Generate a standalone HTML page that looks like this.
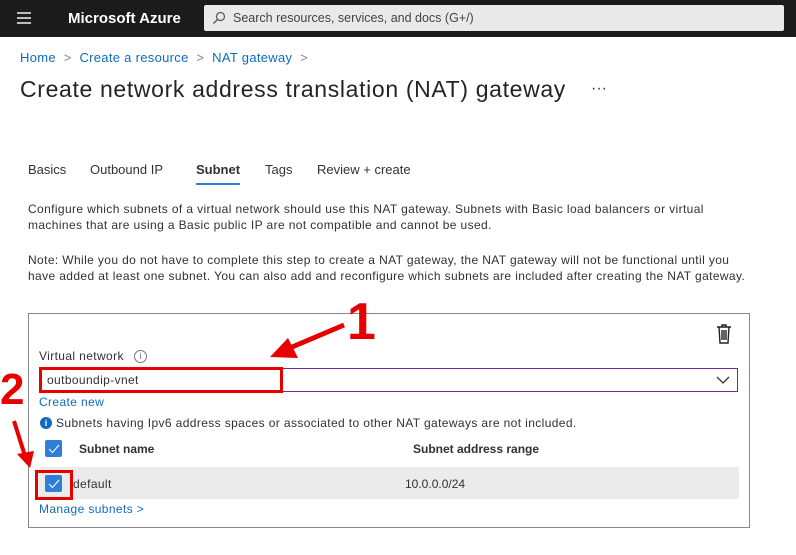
<!DOCTYPE html>
<html><head><style>
*{margin:0;padding:0;box-sizing:border-box}
body{width:796px;height:555px;background:#fff;font-family:"Liberation Sans",sans-serif;color:#323130;position:relative;overflow:hidden}
.a{position:absolute;white-space:nowrap}
.top{left:0;top:0;width:796px;height:37px;background:#1b1b1b}
.lnk{color:#0f6cbd}
.s13{font-size:13px}
.cb{position:absolute;width:17px;height:17px;background:#2f7fd8;border-radius:2px}
.p{letter-spacing:0.38px}
</style></head><body>
<div class="a top"></div>
<div class="a" style="left:17px;top:12px;width:14px;height:2px;background:#bbb;box-shadow:0 5px 0 #bbb,0 10px 0 #bbb"></div>
<div class="a" style="left:68px;top:10px;color:#fff;font-size:15px;font-weight:bold">Microsoft Azure</div>
<div class="a" style="left:204px;top:5px;width:580px;height:26px;background:#e9e9e9;border-radius:2px"></div>
<svg class="a" style="left:212px;top:11px" width="14" height="14"><circle cx="8.5" cy="5.5" r="4" fill="none" stroke="#555" stroke-width="1.2"/><line x1="5.5" y1="8.5" x2="1.5" y2="12.5" stroke="#555" stroke-width="1.3"/></svg>
<div class="a" style="left:233px;top:11px;font-size:12.5px;color:#444">Search resources, services, and docs (G+/)</div>
<div class="a s13" style="left:20px;top:50px;letter-spacing:0.3px"><span class="lnk">Home</span> <span style="color:#888">&nbsp;&gt;&nbsp;</span> <span class="lnk">Create a resource</span> <span style="color:#888">&nbsp;&gt;&nbsp;</span> <span class="lnk">NAT gateway</span> <span style="color:#888">&nbsp;&gt;</span></div>
<div class="a" style="left:20px;top:76px;font-size:23px;color:#252423;letter-spacing:0.65px">Create network address translation (NAT) gateway</div>
<div class="a" style="left:591px;top:80px;font-size:16px">···</div>
<div class="a s13" style="left:28px;top:162px">Basics</div>
<div class="a s13" style="left:90px;top:162px">Outbound IP</div>
<div class="a s13" style="left:196px;top:162px;font-weight:bold">Subnet</div>
<div class="a" style="left:196px;top:183px;width:44px;height:2px;background:#2f7fd8"></div>
<div class="a s13" style="left:265px;top:162px">Tags</div>
<div class="a s13" style="left:317px;top:162px">Review + create</div>
<div class="a p" style="left:28px;top:201px;font-size:12px;line-height:16px">Configure which subnets of a virtual network should use this NAT gateway. Subnets with Basic load balancers or virtual<br>machines that are using a Basic public IP are not compatible and cannot be used.</div>
<div class="a p" style="left:28px;top:252px;font-size:12px;line-height:16px">Note: While you do not have to complete this step to create a NAT gateway, the NAT gateway will not be functional until you<br>have added at least one subnet. You can also add and reconfigure which subnets are included after creating the NAT gateway.</div>
<div class="a" style="left:28px;top:313px;width:722px;height:215px;border:1px solid #8a8886"></div>
<svg class="a" style="left:715px;top:323px" width="18" height="22"><path d="M2 4h14M7 4V2h4v2M4 4l1 16h8l1-16M7 7v10M9 7v10M11 7v10" fill="none" stroke="#222" stroke-width="1.4"/></svg>
<div class="a p" style="left:39px;top:349px;font-size:12px">Virtual network</div>
<div class="a" style="left:134px;top:350px;width:13px;height:13px;border:1px solid #777;border-radius:50%;font-size:9px;text-align:center;line-height:11px;color:#666">i</div>
<div class="a" style="left:39px;top:368px;width:699px;height:24px;border:1px solid #6b2c91"></div>
<svg class="a" style="left:716px;top:376px" width="14" height="9"><path d="M1 1l6 6 6-6" fill="none" stroke="#333" stroke-width="1.3"/></svg>
<div class="a p" style="left:47px;top:373px;font-size:12px">outboundip-vnet</div>
<div class="a" style="left:39px;top:367px;width:244px;height:26px;border:3px solid #e60000"></div>
<div class="a lnk p" style="left:39px;top:395px;font-size:12px">Create new</div>
<div class="a" style="left:40px;top:417px;width:12px;height:12px;background:#0f6cbd;border-radius:50%;color:#fff;font-size:9px;font-weight:bold;text-align:center;line-height:12px">i</div>
<div class="a p" style="left:56px;top:416px;font-size:12px">Subnets having Ipv6 address spaces or associated to other NAT gateways are not included.</div>
<div class="cb" style="left:45px;top:440px"></div>
<svg class="a" style="left:48px;top:444px" width="12" height="10"><path d="M1 5l3.5 3.5L11 1" fill="none" stroke="#fff" stroke-width="1.1"/></svg>
<div class="a" style="left:79px;top:442px;font-size:12px;font-weight:bold">Subnet name</div>
<div class="a" style="left:413px;top:442px;font-size:12px;font-weight:bold">Subnet address range</div>
<div class="a" style="left:39px;top:467px;width:700px;height:32px;background:#ebebeb"></div>
<div class="cb" style="left:45px;top:475px"></div>
<svg class="a" style="left:48px;top:479px" width="12" height="10"><path d="M1 5l3.5 3.5L11 1" fill="none" stroke="#fff" stroke-width="1.1"/></svg>
<div class="a" style="left:35px;top:470px;width:38px;height:30px;border:3px solid #e60000"></div>
<div class="a p" style="left:73px;top:477px;font-size:12px">default</div>
<div class="a" style="left:405px;top:477px;font-size:12px">10.0.0.0/24</div>
<div class="a lnk p" style="left:39px;top:502px;font-size:12px">Manage subnets &gt;</div>
<div class="a" style="left:347px;top:296px;font-size:52px;font-weight:bold;color:#e60000;line-height:52px">1</div>
<svg class="a" style="left:260px;top:320px" width="90" height="45"><line x1="84" y1="5" x2="25" y2="30" stroke="#e60000" stroke-width="5"/><path d="M10 37L28 18L38 38Z" fill="#e60000"/></svg>
<div class="a" style="left:0px;top:366px;font-size:44px;font-weight:bold;color:#e60000;line-height:48px">2</div>
<svg class="a" style="left:8px;top:418px" width="30" height="55"><line x1="6" y1="3" x2="17" y2="38" stroke="#e60000" stroke-width="4"/><path d="M9 36L22 50L26 33Z" fill="#e60000"/></svg>
</body></html>
